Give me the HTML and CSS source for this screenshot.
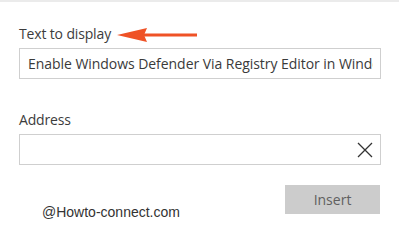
FILE: index.html
```html
<!DOCTYPE html>
<html lang="en">
<head>
<meta charset="utf-8">
<title>Insert link</title>
<link rel="stylesheet" href="styles.css">
</head>
<body>
<div class="dialog">
  <div class="label-row">
    <label class="label" for="display">Text to display</label>
    <svg class="pointer" width="82" height="16" viewBox="0 0 82 16" aria-hidden="true">
      <path d="M0 8 L30 1 L27 8 L30 15 Z" fill="#ef5226"/>
      <rect x="27" y="6.5" width="53" height="3" fill="#ef5226"/>
    </svg>
  </div>
  <div class="field">
    <input id="display" class="field-input" type="text" value="Enable Windows Defender Via Registry Editor in Windows 10">
  </div>

  <label class="label label-address" for="address">Address</label>
  <div class="field">
    <input id="address" class="field-input" type="text" value="">
    <button class="clear" type="button" aria-label="Clear">
      <svg width="16" height="16" viewBox="0 0 16 16">
        <path d="M1 1 L15 15 M15 1 L1 15" stroke="#333" stroke-width="1.3" fill="none"/>
      </svg>
    </button>
  </div>

  <div class="footer">
    <span class="watermark">@Howto-connect.com</span>
    <button class="insert" type="button">Insert</button>
  </div>
</div>
</body>
</html>
```

FILE: styles.css
```css
html, body {
  margin: 0;
  padding: 0;
  background: #ffffff;
}

body {
  font-family: "Segoe UI", "Open Sans", "Noto Sans", sans-serif;
  color: #333333;
}

.dialog {
  border-top: 2px solid #ebebeb;
  padding: 22px 18px 16px 19px;
}

.label-row {
  display: flex;
  align-items: center;
  height: 20px;
}

.label {
  display: block;
  font-size: 14px;
  line-height: 20px;
  letter-spacing: -0.15px;
  color: #3c3c3c;
}

.pointer {
  margin-left: 6px;
  margin-top: 1px;
}

.field {
  display: flex;
  align-items: center;
  height: 31px;
  margin-top: 4px;
  border: 1px solid #cfcfcf;
  box-sizing: border-box;
}

.field-input {
  flex: 1;
  min-width: 0;
  height: 100%;
  border: 0;
  outline: none;
  padding: 0 7px 0 8px;
  font-family: inherit;
  font-size: 14px;
  letter-spacing: -0.05px;
  color: #3a3a3a;
  background: transparent;
}

.label-address {
  margin-top: 31px;
}

.clear {
  display: flex;
  align-items: center;
  justify-content: center;
  width: 30px;
  height: 29px;
  padding: 0;
  margin-right: 0;
  border: 0;
  background: transparent;
}

.footer {
  display: flex;
  align-items: flex-start;
  justify-content: space-between;
  margin-top: 20px;
}

.watermark {
  font-family: "Liberation Sans", Arial, sans-serif;
  font-size: 14px;
  line-height: 16px;
  color: #333333;
  margin-left: 23px;
  padding-top: 19px;
}

.insert {
  width: 95px;
  height: 29px;
  border: 0;
  margin-right: 1px;
  background: #cccccc;
  color: #5f5f5f;
  font-family: inherit;
  font-size: 14px;
  padding: 0;
}
```
